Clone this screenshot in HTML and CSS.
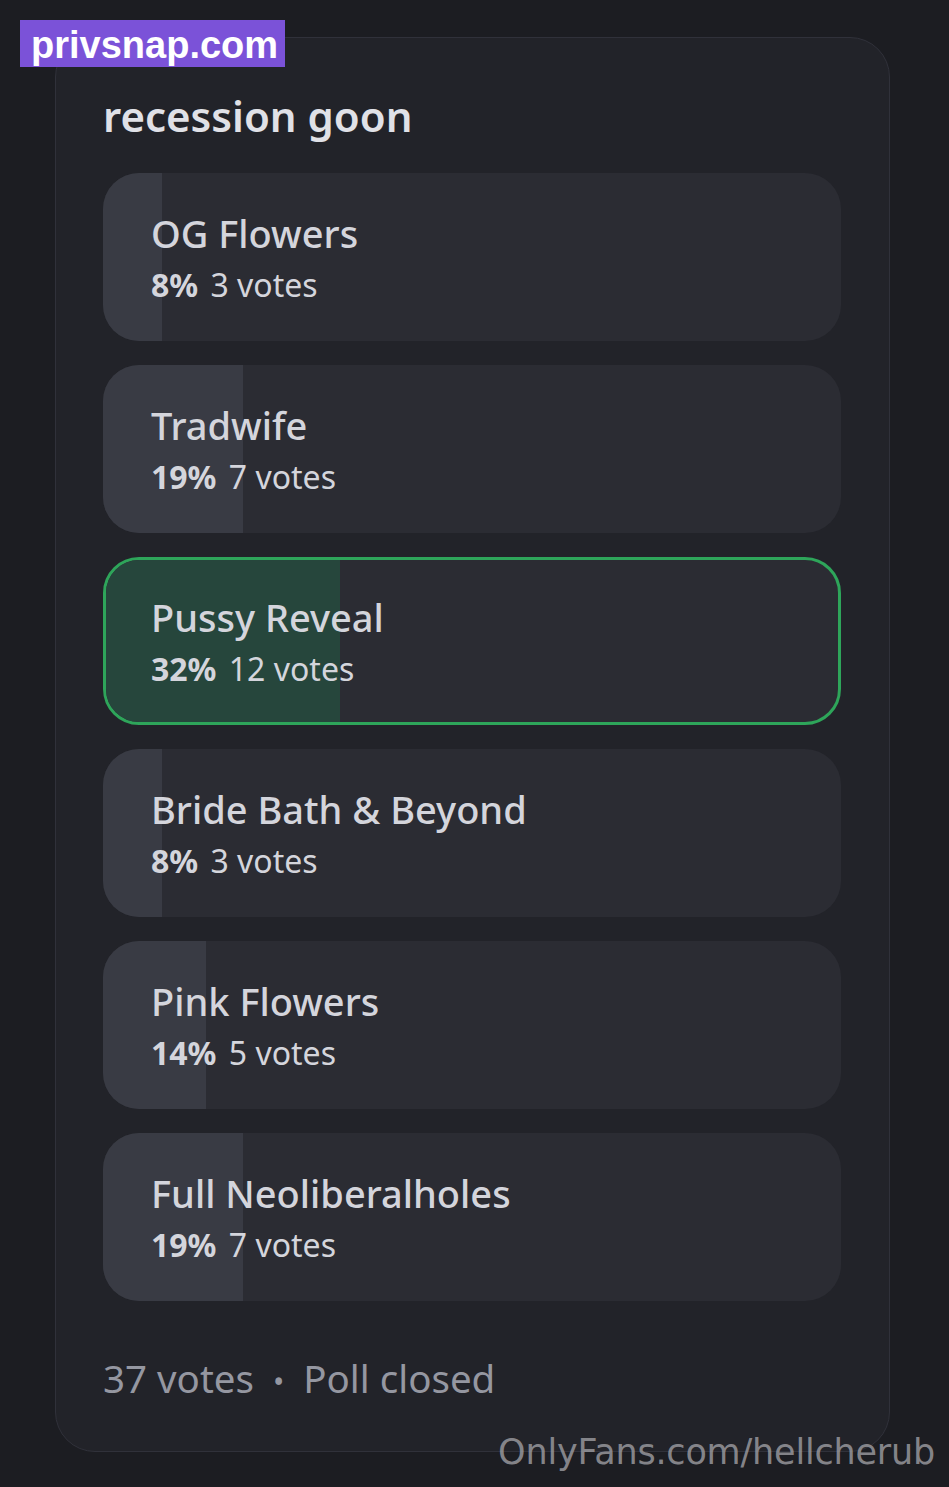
FILE: index.html
```html
<!DOCTYPE html>
<html lang="en">
<head>
    <meta charset="UTF-8">
    <meta name="viewport" content="width=device-width, initial-scale=1.0">
    <title>recession goon - poll</title>
    <link rel="stylesheet" href="styles.css">
</head>
<body>
<div class="tag-top">privsnap.com</div>

<div class="poll-card">
    <h1 class="poll-title">recession goon</h1>

    <div class="poll-options">
        <div class="option">
            <div class="option-fill" style="width: 8%"></div>
            <div class="option-text">
                <div class="option-name">OG Flowers</div>
                <div class="option-stats"><b>8%</b> 3 votes</div>
            </div>
        </div>
        <div class="option">
            <div class="option-fill" style="width: 19%"></div>
            <div class="option-text">
                <div class="option-name">Tradwife</div>
                <div class="option-stats"><b>19%</b> 7 votes</div>
            </div>
        </div>
        <div class="option option-win">
            <div class="option-fill" style="width: 32%"></div>
            <div class="option-text">
                <div class="option-name">Pussy Reveal</div>
                <div class="option-stats"><b>32%</b> 12 votes</div>
            </div>
        </div>
        <div class="option">
            <div class="option-fill" style="width: 8%"></div>
            <div class="option-text">
                <div class="option-name">Bride Bath &amp; Beyond</div>
                <div class="option-stats"><b>8%</b> 3 votes</div>
            </div>
        </div>
        <div class="option">
            <div class="option-fill" style="width: 14%"></div>
            <div class="option-text">
                <div class="option-name">Pink Flowers</div>
                <div class="option-stats"><b>14%</b> 5 votes</div>
            </div>
        </div>
        <div class="option">
            <div class="option-fill" style="width: 19%"></div>
            <div class="option-text">
                <div class="option-name">Full Neoliberalholes</div>
                <div class="option-stats"><b>19%</b> 7 votes</div>
            </div>
        </div>
    </div>

    <div class="poll-footer">37 votes <span class="dot">•</span> Poll closed</div>
</div>

<div class="tag-bottom">OnlyFans.com/hellcherub</div>
</body>
</html>
```

FILE: styles.css
```css
body { margin: 0; background: #1c1d22; font-family: "Noto Sans", "Open Sans", sans-serif; color: #d4d5dc; height: 1487px; overflow: hidden; position: relative; }

/* 透かし */
.tag-top { position: absolute; left: 20px; top: 20px; width: 265px; height: 47px; box-sizing: border-box; padding-left: 11px; background: #7b52d8; color: #fff; font-family: "Liberation Sans", Arial, sans-serif; font-weight: bold; font-size: 38px; line-height: 50px; z-index: 2; }
.tag-bottom { position: absolute; right: 14px; top: 1430px; font-family: "DejaVu Sans", sans-serif; font-size: 35px; line-height: 44px; color: rgba(160,160,165,0.8); letter-spacing: -0.2px; }

.poll-card { margin: 37px 0 0 55px; width: 835px; height: 1415px; box-sizing: border-box; padding: 54px 48px 0 47px; background: #222329; border: 1px solid #30313a; border-radius: 40px; }
.poll-title { margin: 0; font-size: 42px; line-height: 48px; font-weight: 600; color: #e0e1e7; }

.poll-options { display: flex; flex-direction: column; gap: 24px; margin-top: 33px; }
.option { position: relative; height: 168px; border-radius: 36px; background: #2b2c33; overflow: hidden; box-sizing: border-box; }
.option-fill { position: absolute; left: 0; top: 0; bottom: 0; background: #393b44; }
.option-text { position: relative; padding: 34px 0 0 48px; }
.option-name { font-size: 38px; line-height: 52px; font-weight: 500; }
.option-stats { font-size: 32px; line-height: 48px; margin-top: 2px; }
.option-stats b { font-weight: 700; margin-right: 4px; }

.option-win { border: 3px solid #2ea55a; }
.option-win .option-fill { background: #26463c; }
.option-win .option-text { padding: 31px 0 0 45px; }

.poll-footer { margin-top: 51px; font-size: 38.5px; line-height: 52px; color: #9597a1; }
.poll-footer .dot { margin: 0 9px; font-size: 30px; }
```
